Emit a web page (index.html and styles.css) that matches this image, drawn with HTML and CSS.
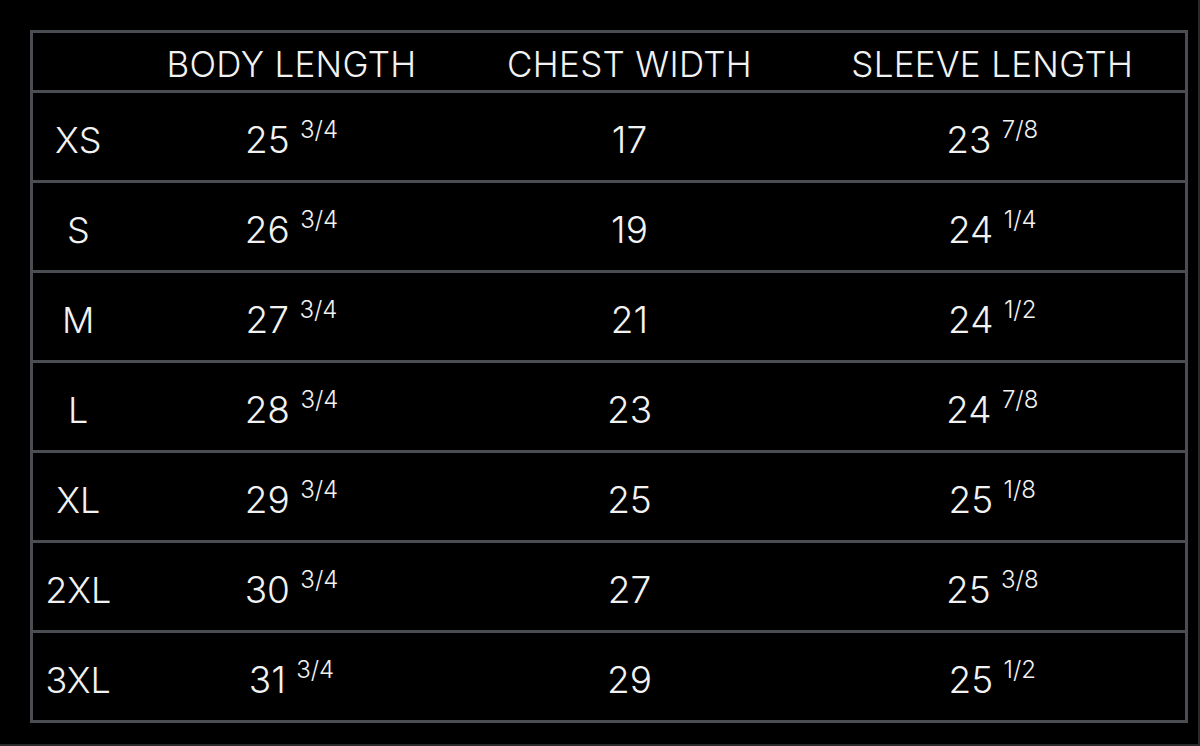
FILE: index.html
```html
<!DOCTYPE html>
<html>
<head>
<meta charset="utf-8">
<link rel="stylesheet" href="styles.css">
</head>
<body>
<div class="frame">
<table class="sizes">
  <colgroup>
    <col class="c-size">
    <col class="c-body">
    <col class="c-chest">
    <col class="c-sleeve">
  </colgroup>
  <thead>
    <tr class="head">
      <th></th>
      <th>BODY LENGTH</th>
      <th>CHEST WIDTH</th>
      <th>SLEEVE LENGTH</th>
    </tr>
  </thead>
  <tbody>
    <tr><td class="size">XS</td><td>25 <sup>3/4</sup></td><td>17</td><td>23 <sup>7/8</sup></td></tr>
    <tr><td class="size">S</td><td>26 <sup>3/4</sup></td><td>19</td><td>24 <sup>1/4</sup></td></tr>
    <tr><td class="size">M</td><td>27 <sup>3/4</sup></td><td>21</td><td>24 <sup>1/2</sup></td></tr>
    <tr><td class="size">L</td><td>28 <sup>3/4</sup></td><td>23</td><td>24 <sup>7/8</sup></td></tr>
    <tr><td class="size">XL</td><td>29 <sup>3/4</sup></td><td>25</td><td>25 <sup>1/8</sup></td></tr>
    <tr><td class="size">2XL</td><td>30 <sup>3/4</sup></td><td>27</td><td>25 <sup>3/8</sup></td></tr>
    <tr><td class="size">3XL</td><td>31 <sup>3/4</sup></td><td>29</td><td>25 <sup>1/2</sup></td></tr>
  </tbody>
</table>
</div>
</body>
</html>
```
FILE: styles.css
```css
html, body {
  margin: 0;
  padding: 0;
  background: #000;
}
body {
  width: 1200px;
  height: 746px;
  overflow: hidden;
  font-family: Inter, "Open Sans", "Liberation Sans", sans-serif;
  color: #f2f2f2;
}
.frame {
  box-sizing: border-box;
  width: 1200px;
  height: 746px;
  padding: 30px 0 0 30px;
  border-right: 2px solid #2a2a2a;
  border-bottom: 2px solid #2a2a2a;
}
.sizes {
  border-collapse: collapse;
  width: 1155px;
  table-layout: fixed;
}
.c-size { width: 92px; }
.c-body { width: 336px; }
.c-chest { width: 340px; }
.c-sleeve { width: 387px; }
.sizes th, .sizes td {
  border: 3px solid #4a4d51;
  border-left: none;
  border-right: none;
  text-align: center;
  padding: 0;
  font-weight: 300;
}
.sizes th:first-child, .sizes td:first-child { border-left: 3px solid #4a4d51; }
.sizes th:last-child, .sizes td:last-child { border-right: 3px solid #4a4d51; }
.head th {
  height: 52px;
  font-size: 35px;
  letter-spacing: 0.3px;
  padding-top: 5px;
}
.sizes tbody tr { height: 90px; }
.sizes td {
  font-size: 37px;
  padding-top: 6px;
}
.sizes td.size {
  font-size: 36px;
}
.sizes sup {
  font-size: 24px;
  vertical-align: 15px;
  line-height: 0;
}
```
